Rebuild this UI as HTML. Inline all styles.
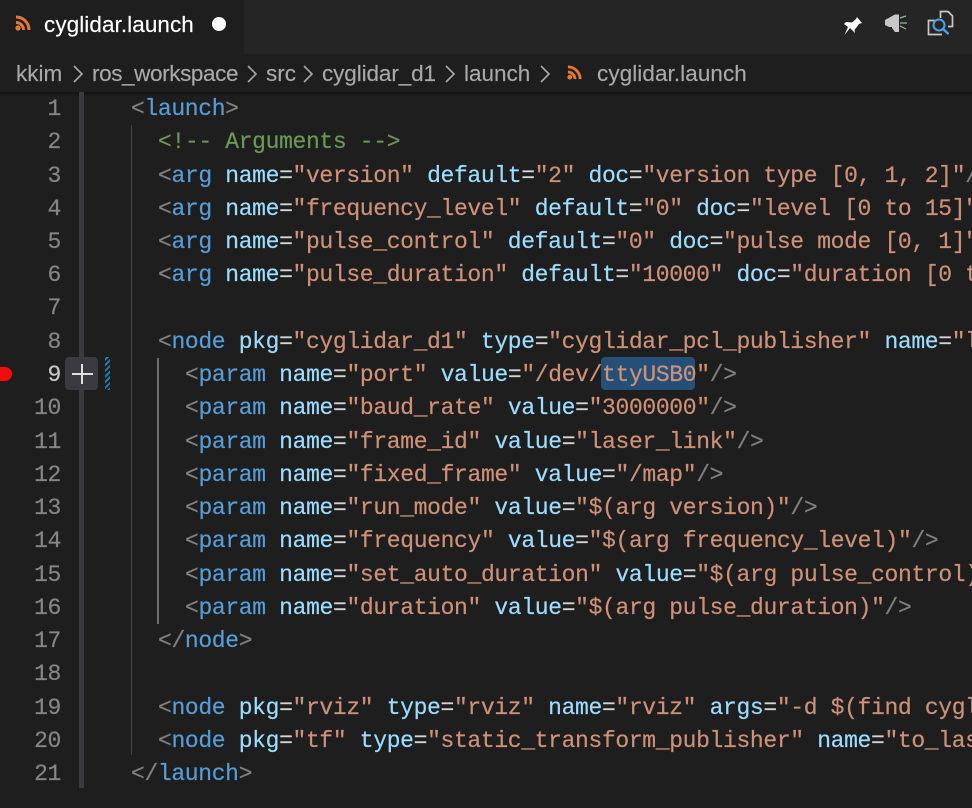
<!DOCTYPE html>
<html><head><meta charset="utf-8"><style>
html,body{margin:0;padding:0;background:#1e1e1e}
#r{position:relative;width:972px;height:808px;overflow:hidden;background:#1e1e1e}
#r>*{position:absolute}
.u{font-family:"Liberation Sans",sans-serif;white-space:pre}
.b{top:60px;font-size:22.5px;line-height:28px;color:#a9a9a9;-webkit-text-stroke:.15px}
.l{left:0;width:972px;height:33px;line-height:33px;font-family:"Liberation Mono",monospace;font-size:23px;letter-spacing:-.35px;white-space:pre;color:#d4d4d4;-webkit-text-stroke:.2px}
.n{position:absolute;right:911px;top:0;color:#858585}
.c{position:absolute;top:0}
i{font-style:normal;color:#808080}b{font-weight:normal;color:#569cd6}u{text-decoration:none;color:#9cdcfe}s{text-decoration:none;color:#ce9178}
</style></head><body><div id="r">
<div style="left:0;top:0;width:972px;height:54px;background:#252526"></div>
<div style="left:0;top:0;width:244px;height:54px;background:#1e1e1e"></div>
<div style="left:0;top:54px;width:972px;height:38px;background:#1e1e1e"></div>
<div style="left:0;top:92px;width:972px;height:4px;background:linear-gradient(#111,#1e1e1e)"></div>
<svg style="left:15px;top:15px" width="16" height="16" viewBox="0 0 16 16" fill="none" stroke="#e37933" stroke-width="3"><circle cx="3" cy="13" r="2.6" fill="#e37933" stroke="none"/><path d="M1 7.5a7.5 7.5 0 0 1 7.5 7.5M1 2a13 13 0 0 1 13 13"/></svg>
<div class="u" style="left:44px;top:11px;font-size:22.5px;line-height:28px;color:#fff;letter-spacing:.07px;-webkit-text-stroke:.15px">cyglidar.launch</div>
<div style="left:212px;top:17px;width:14px;height:14px;border-radius:50%;background:#fff"></div>
<svg style="left:0;top:0" width="972" height="54" fill="none">
<path d="M857 17L862 23L859 24L854.500 30L855 33L850 28L844.500 35L848 27L844 24L846 22L852 22.500L856 19z" fill="#fff"/>
<path d="M885 20L895 14.500H899V32H895L892 28V27H889L885 25z" fill="#c8c8c8"/>
<path d="M900 18L906 16M900 23H907M900 26L906 29" stroke="#8cc09a" stroke-width="1.200"/>
<path d="M935 20.500H928.500V34.500H942M940.500 18V11.500H948L952.500 16V26.500H948" stroke="#c8c8c8" stroke-width="1.700"/>
<circle cx="939" cy="25" r="5.500" stroke="#4f9fe6" stroke-width="2"/>
<path d="M943 29L948.500 34" stroke="#4f9fe6" stroke-width="2.400"/>
</svg>
<div class="u b" style="left:16px">kkim</div>
<div class="u b" style="left:92px;letter-spacing:-.4px">ros_workspace</div>
<div class="u b" style="left:266px">src</div>
<div class="u b" style="left:322px;letter-spacing:-.1px">cyglidar_d1</div>
<div class="u b" style="left:464px">launch</div>
<div class="u b" style="left:597px;letter-spacing:.07px">cyglidar.launch</div>
<svg style="left:0;top:54px" width="560" height="38" fill="none" stroke="#a9a9a9" stroke-width="1.600"><path d="M74 12l8 8-8 8M248 12l8 8-8 8M304 12l8 8-8 8M446 12l8 8-8 8M541 12l8 8-8 8"/></svg>
<svg style="left:567px;top:65px" width="15" height="15" viewBox="0 0 16 16" fill="none" stroke="#e37933" stroke-width="3"><circle cx="3" cy="13" r="2.600" fill="#e37933" stroke="none"/><path d="M1 7.500a7.500 7.500 0 0 1 7.500 7.500M1 2a13 13 0 0 1 13 13"/></svg>

<div style="left:79px;top:92px;width:5px;height:696px;background:#3a3a40"></div>
<div style="left:131px;top:125px;width:1px;height:630px;background:#444"></div>
<div style="left:157px;top:358px;width:2px;height:266px;background:#6e6e6e"></div>
<div style="left:601px;top:357px;width:94px;height:33px;border-radius:4px;background:#264f78"></div>
<div style="left:0;top:367px;width:12px;height:14px;border-radius:0 7px 7px 0;background:#f00d0d"></div>
<div style="left:65px;top:357px;width:33px;height:33px;border-radius:4px;background:#3a3a40"></div>
<div style="left:72px;top:373.25px;width:21px;height:1.5px;background:#e0e0e0"></div>
<div style="left:81.25px;top:364px;width:1.5px;height:20px;background:#e0e0e0"></div>
<div style="left:105px;top:357px;width:5px;height:33px;background:repeating-linear-gradient(-45deg,#1b81a8 0 2px,#1e1e1e 2px 4px)"></div>

<div class="l" style="top:93px"><span class="n">1</span><span class="c" style="left:131px"><i>&lt;</i><b>launch</b><i>&gt;</i></span></div>
<div class="l" style="top:126px"><span class="n">2</span><span class="c" style="left:158px;color:#6a9955">&lt;!-- Arguments --&gt;</span></div>
<div class="l" style="top:160px"><span class="n">3</span><span class="c" style="left:158px"><i>&lt;</i><b>arg</b> <u>name</u>=<s>"version"</s> <u>default</u>=<s>"2"</s> <u>doc</u>=<s>"version type [0, 1, 2]"</s><i>/&gt;</i></span></div>
<div class="l" style="top:193px"><span class="n">4</span><span class="c" style="left:158px"><i>&lt;</i><b>arg</b> <u>name</u>=<s>"frequency_level"</s> <u>default</u>=<s>"0"</s> <u>doc</u>=<s>"level [0 to 15]"</s><i>/&gt;</i></span></div>
<div class="l" style="top:226px"><span class="n">5</span><span class="c" style="left:158px"><i>&lt;</i><b>arg</b> <u>name</u>=<s>"pulse_control"</s> <u>default</u>=<s>"0"</s> <u>doc</u>=<s>"pulse mode [0, 1]"</s><i>/&gt;</i></span></div>
<div class="l" style="top:259px"><span class="n">6</span><span class="c" style="left:158px"><i>&lt;</i><b>arg</b> <u>name</u>=<s>"pulse_duration"</s> <u>default</u>=<s>"10000"</s> <u>doc</u>=<s>"duration [0 to"</s></span></div>
<div class="l" style="top:292px"><span class="n">7</span></div>
<div class="l" style="top:326px"><span class="n">8</span><span class="c" style="left:158px"><i>&lt;</i><b>node</b> <u>pkg</u>=<s>"cyglidar_d1"</s> <u>type</u>=<s>"cyglidar_pcl_publisher"</s> <u>name</u>=<s>"lidar"</s></span></div>
<div class="l" style="top:359px"><span class="n" style="color:#c6c6c6">9</span><span class="c" style="left:185px"><i>&lt;</i><b>param</b> <u>name</u>=<s>"port"</s> <u>value</u>=<s>"/dev/ttyUSB0"</s><i>/&gt;</i></span></div>
<div class="l" style="top:392px"><span class="n">10</span><span class="c" style="left:185px"><i>&lt;</i><b>param</b> <u>name</u>=<s>"baud_rate"</s> <u>value</u>=<s>"3000000"</s><i>/&gt;</i></span></div>
<div class="l" style="top:426px"><span class="n">11</span><span class="c" style="left:185px"><i>&lt;</i><b>param</b> <u>name</u>=<s>"frame_id"</s> <u>value</u>=<s>"laser_link"</s><i>/&gt;</i></span></div>
<div class="l" style="top:459px"><span class="n">12</span><span class="c" style="left:185px"><i>&lt;</i><b>param</b> <u>name</u>=<s>"fixed_frame"</s> <u>value</u>=<s>"/map"</s><i>/&gt;</i></span></div>
<div class="l" style="top:492px"><span class="n">13</span><span class="c" style="left:185px"><i>&lt;</i><b>param</b> <u>name</u>=<s>"run_mode"</s> <u>value</u>=<s>"$(arg version)"</s><i>/&gt;</i></span></div>
<div class="l" style="top:525px"><span class="n">14</span><span class="c" style="left:185px"><i>&lt;</i><b>param</b> <u>name</u>=<s>"frequency"</s> <u>value</u>=<s>"$(arg frequency_level)"</s><i>/&gt;</i></span></div>
<div class="l" style="top:559px"><span class="n">15</span><span class="c" style="left:185px"><i>&lt;</i><b>param</b> <u>name</u>=<s>"set_auto_duration"</s> <u>value</u>=<s>"$(arg pulse_control)"</s><i>/&gt;</i></span></div>
<div class="l" style="top:592px"><span class="n">16</span><span class="c" style="left:185px"><i>&lt;</i><b>param</b> <u>name</u>=<s>"duration"</s> <u>value</u>=<s>"$(arg pulse_duration)"</s><i>/&gt;</i></span></div>
<div class="l" style="top:625px"><span class="n">17</span><span class="c" style="left:158px"><i>&lt;/</i><b>node</b><i>&gt;</i></span></div>
<div class="l" style="top:658px"><span class="n">18</span></div>
<div class="l" style="top:692px"><span class="n">19</span><span class="c" style="left:158px"><i>&lt;</i><b>node</b> <u>pkg</u>=<s>"rviz"</s> <u>type</u>=<s>"rviz"</s> <u>name</u>=<s>"rviz"</s> <u>args</u>=<s>"-d $(find cyglidar_d1)"</s></span></div>
<div class="l" style="top:725px"><span class="n">20</span><span class="c" style="left:158px"><i>&lt;</i><b>node</b> <u>pkg</u>=<s>"tf"</s> <u>type</u>=<s>"static_transform_publisher"</s> <u>name</u>=<s>"to_laser"</s></span></div>
<div class="l" style="top:758px"><span class="n">21</span><span class="c" style="left:131px"><i>&lt;/</i><b>launch</b><i>&gt;</i></span></div>
</div></body></html>
